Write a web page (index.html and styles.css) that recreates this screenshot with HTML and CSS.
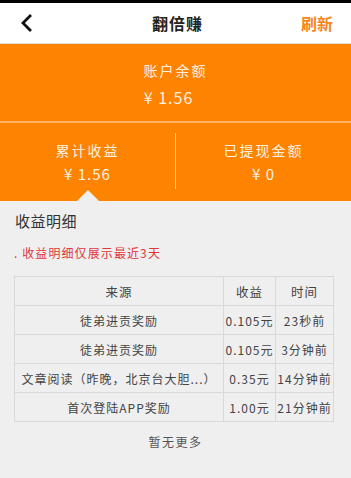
FILE: index.html
```html
<!DOCTYPE html>
<html lang="zh-CN">
<head>
    <meta charset="UTF-8">
    <meta name="viewport" content="width=device-width, initial-scale=1.0">
    <title>翻倍赚</title>
    <link rel="stylesheet" href="styles.css">
</head>
<body>

<div class="statusbar"></div>
<div class="header">
    <span class="back">
        <svg width="12" height="18" viewBox="0 0 12 18"><path d="M10 2 L3 9 L10 16" fill="none" stroke="#111" stroke-width="2.8" stroke-linecap="square"/></svg>
    </span>
    <span class="title">翻倍赚</span>
    <span class="refresh">刷新</span>
</div>

<div class="balance">
    <div class="label">账户余额</div>
    <div class="value">¥ 1.56</div>
</div>
<div class="stats">
    <div class="stat active">
        <div class="label">累计收益</div>
        <div class="value">¥ 1.56</div>
    </div>
    <div class="divider"></div>
    <div class="stat">
        <div class="label">已提现金额</div>
        <div class="value">¥ 0</div>
    </div>
</div>

<div class="detail">
    <h2>收益明细</h2>
    <p class="notice">. 收益明细仅展示最近3天</p>
    <table class="income">
        <tr>
            <th class="col-src">来源</th>
            <th class="col-amt">收益</th>
            <th class="col-time">时间</th>
        </tr>
        <tr>
            <td>徒弟进贡奖励</td>
            <td>0.105元</td>
            <td>23秒前</td>
        </tr>
        <tr>
            <td>徒弟进贡奖励</td>
            <td>0.105元</td>
            <td>3分钟前</td>
        </tr>
        <tr>
            <td>文章阅读（昨晚，北京台大胆...）</td>
            <td>0.35元</td>
            <td>14分钟前</td>
        </tr>
        <tr>
            <td>首次登陆APP奖励</td>
            <td>1.00元</td>
            <td>21分钟前</td>
        </tr>
    </table>
    <div class="more">暂无更多</div>
</div>

</body>
</html>
```

FILE: styles.css
```css
body {
    margin: 0;
    font-family: "Noto Sans CJK SC", "Noto Sans", sans-serif;
    background-color: #efefef;
    height: 478px;
    overflow: hidden;
}
.statusbar {
    height: 3px;
    background-color: #000;
}
.header {
    height: 40px;
    background-color: #fff;
    border-bottom: 1px solid #dcdcdc;
    display: flex;
    align-items: center;
    justify-content: space-between;
    padding: 0 18px 0 20px;
}
.back {
    width: 40px;
    display: flex;
    align-items: center;
}
.title {
    font-size: 16px;
    font-weight: bold;
    color: #222;
    letter-spacing: 1px;
    margin-left: 2px;
}
.refresh {
    width: 40px;
    text-align: right;
    font-size: 16px;
    font-weight: bold;
    color: #f7861c;
}
.balance {
    height: 79px;
    box-sizing: border-box;
    padding-top: 16px;
    background-color: #fe8300;
    border-bottom: 2px solid #ffb567;
    text-align: center;
    color: #fff1e0;
}
.label {
    font-size: 14px;
    line-height: 20px;
    letter-spacing: 2px;
}
.balance .value {
    font-size: 16px;
    line-height: 22px;
    letter-spacing: 1px;
    margin-top: 6px;
    padding-right: 14px;
}
.stats {
    height: 78px;
    background-color: #fe8300;
    display: flex;
    color: #fff1e0;
}
.stat {
    flex: 1;
    text-align: center;
    box-sizing: border-box;
    padding-top: 17px;
    position: relative;
}
.stat .value {
    font-size: 15px;
    line-height: 20px;
    letter-spacing: 1px;
    margin-top: 4px;
}
.stat.active::after {
    content: "";
    position: absolute;
    bottom: 0;
    left: 50%;
    margin-left: -11px;
    border-left: 11px solid transparent;
    border-right: 11px solid transparent;
    border-bottom: 11px solid #efefef;
}
.divider {
    width: 1px;
    margin: 10px 0 12px;
    background-color: #ffd2a0;
}
.detail {
    padding-top: 10px;
}
h2 {
    margin: 0 0 0 15px;
    font-size: 15px;
    line-height: 20px;
    font-weight: normal;
    letter-spacing: 0.5px;
    color: #333;
}
.notice {
    margin: 13px 0 0 14px;
    font-size: 12px;
    line-height: 18px;
    letter-spacing: 1.1px;
    color: #e0363c;
}
.income {
    margin: 14px 0 0 14px;
    width: 320px;
    border-collapse: collapse;
    table-layout: fixed;
    font-size: 12px;
    color: #444;
    letter-spacing: 1px;
}
.income th, .income td {
    border: 1.5px solid #d9d9d9;
    height: 28px;
    padding: 0;
    text-align: center;
    white-space: nowrap;
    overflow: hidden;
    font-weight: normal;
}
.income th {
    font-size: 12.5px;
}
.col-src {
    width: 208px;
}
.col-amt {
    width: 51px;
}
.more {
    margin-top: 11px;
    text-align: center;
    font-size: 12px;
    line-height: 18px;
    letter-spacing: 1.5px;
    color: #555;
}
```
